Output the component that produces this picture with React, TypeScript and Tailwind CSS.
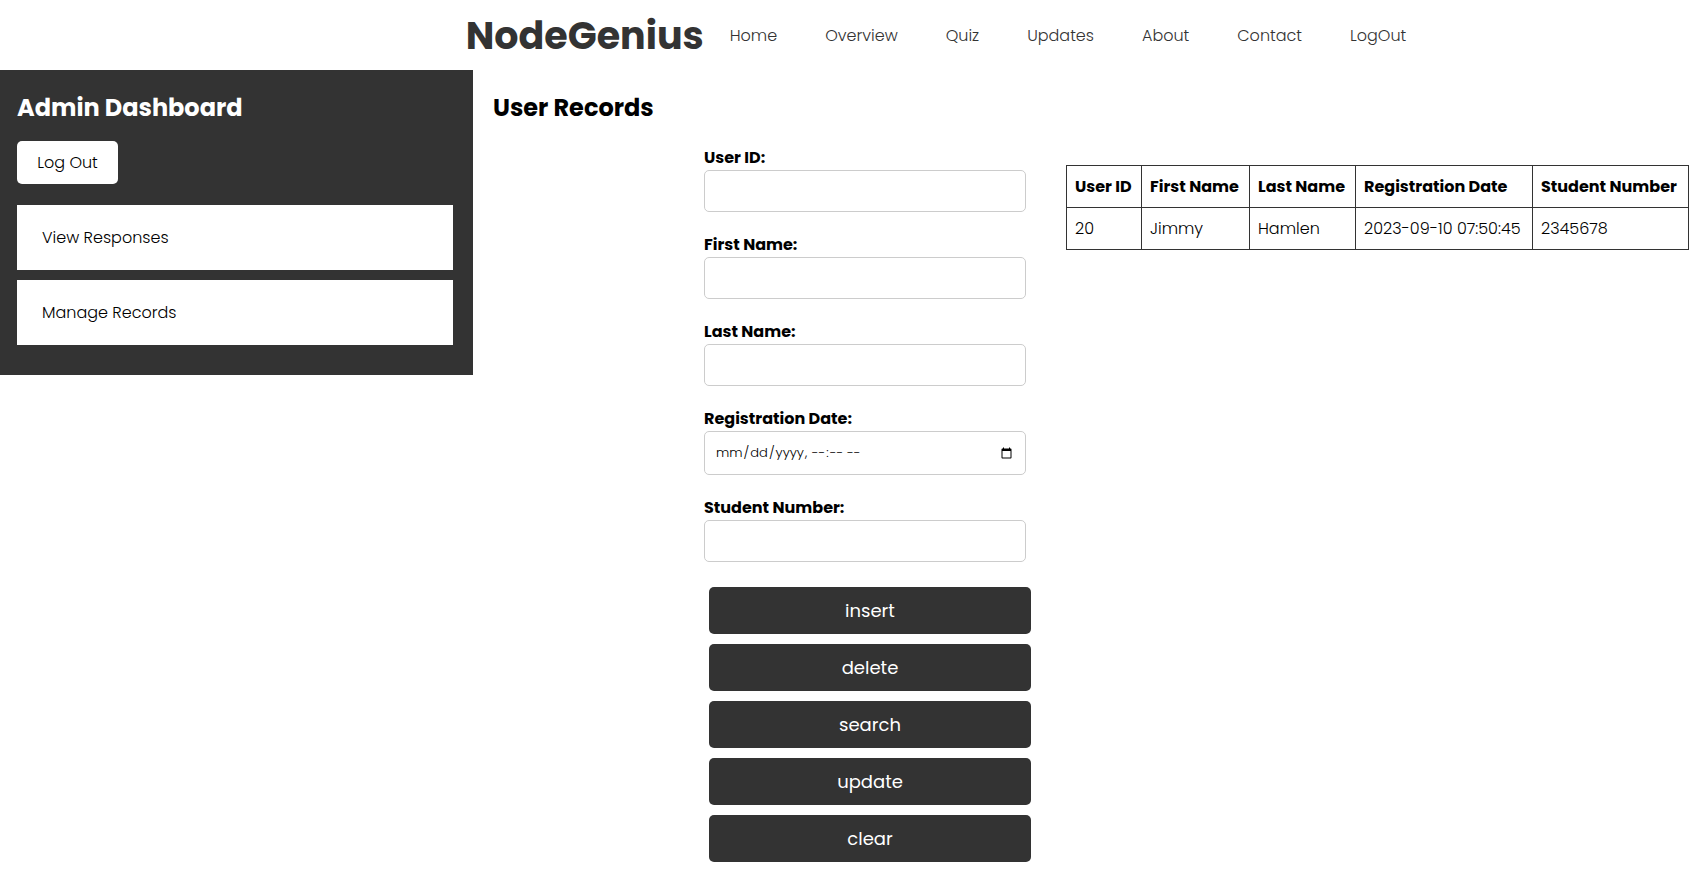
const navLinks = ["Home", "Overview", "Quiz", "Updates", "About", "Contact", "LogOut"];

const fields = [
  { id: "user-id", label: "User ID:", type: "text" },
  { id: "first-name", label: "First Name:", type: "text" },
  { id: "last-name", label: "Last Name:", type: "text" },
  { id: "registration-date", label: "Registration Date:", type: "datetime-local" },
  { id: "student-number", label: "Student Number:", type: "text" },
];

const actions = ["insert", "delete", "search", "update", "clear"];

const columns = [
  { name: "User ID", width: "w-[75px]" },
  { name: "First Name", width: "w-[108px]" },
  { name: "Last Name", width: "w-[106px]" },
  { name: "Registration Date", width: "w-[177px]" },
  { name: "Student Number", width: "w-[156px]" },
];

const records = [["20", "Jimmy", "Hamlen", "2023-09-10 07:50:45", "2345678"]];

function Header() {
  return (
    <header className="flex h-[70px] items-center justify-center pt-0.5 pl-[180px] text-[#333]">
      <a href="#" className="w-[264px] text-[38px] leading-[58px] font-bold">
        NodeGenius
      </a>
      <nav className="flex gap-12">
        {navLinks.map((link) => (
          <a key={link} href="#" className="font-light">
            {link}
          </a>
        ))}
      </nav>
    </header>
  );
}

function Sidebar() {
  return (
    <aside className="w-[473px] shrink-0 self-start bg-[#333] pt-5 pr-5 pb-[30px] pl-[17px]">
      <h2 className="text-2xl leading-9 font-bold text-white">Admin Dashboard</h2>
      <button className="mt-[15px] h-[43px] w-[101px] rounded-[5px] bg-white font-light">Log Out</button>
      <nav className="mt-[21px] flex flex-col gap-2.5">
        {["View Responses", "Manage Records"].map((item) => (
          <a key={item} href="#" className="flex h-[65px] items-center bg-white px-[25px] font-light">
            {item}
          </a>
        ))}
      </nav>
    </aside>
  );
}

function RecordForm() {
  return (
    <form className="w-[322px] shrink-0" onSubmit={(event) => event.preventDefault()}>
      {fields.map((field) => (
        <div key={field.id} className="mb-5">
          <label htmlFor={field.id} className="block h-[25px] leading-[25px] font-bold">
            {field.label}
          </label>
          <input
            id={field.id}
            type={field.type}
            className={
              field.type === "text"
                ? "block h-[42px] w-full rounded-[5px] border border-[#ccc] px-2.5 text-[13px] font-light"
                : "block h-11 w-full rounded-[5px] border border-[#ccc] px-2.5 text-[13px] font-light"
            }
          />
        </div>
      ))}
      <div className="mt-[25px] ml-[5px] flex w-full flex-col gap-2.5">
        {actions.map((action) => (
          <button key={action} type="button" className="h-[47px] w-full rounded-[5px] bg-[#333] text-lg text-white">
            {action}
          </button>
        ))}
      </div>
    </form>
  );
}

function RecordTable() {
  return (
    <table className="mt-5 table-fixed border-collapse self-start text-left whitespace-nowrap">
      <thead>
        <tr className="h-[42px]">
          {columns.map((column) => (
            <th key={column.name} className={`${column.width} border border-[#333] px-2 font-bold`}>
              {column.name}
            </th>
          ))}
        </tr>
      </thead>
      <tbody>
        {records.map((row) => (
          <tr key={row[0]} className="h-[42px]">
            {row.map((cell) => (
              <td key={cell} className="border border-[#333] px-2 font-light">
                {cell}
              </td>
            ))}
          </tr>
        ))}
      </tbody>
    </table>
  );
}

export default function App() {
  return (
    <div className="min-h-screen bg-white font-[Poppins,Inter,sans-serif] text-base text-black">
      <Header />
      <div className="flex">
        <Sidebar />
        <main className="min-w-0 flex-1 pt-5 pb-3 pl-5">
          <h2 className="text-2xl leading-9 font-bold">User Records</h2>
          <div className="mt-[19px] flex justify-end gap-10 pr-[3px]">
            <RecordForm />
            <RecordTable />
          </div>
        </main>
      </div>
    </div>
  );
}
